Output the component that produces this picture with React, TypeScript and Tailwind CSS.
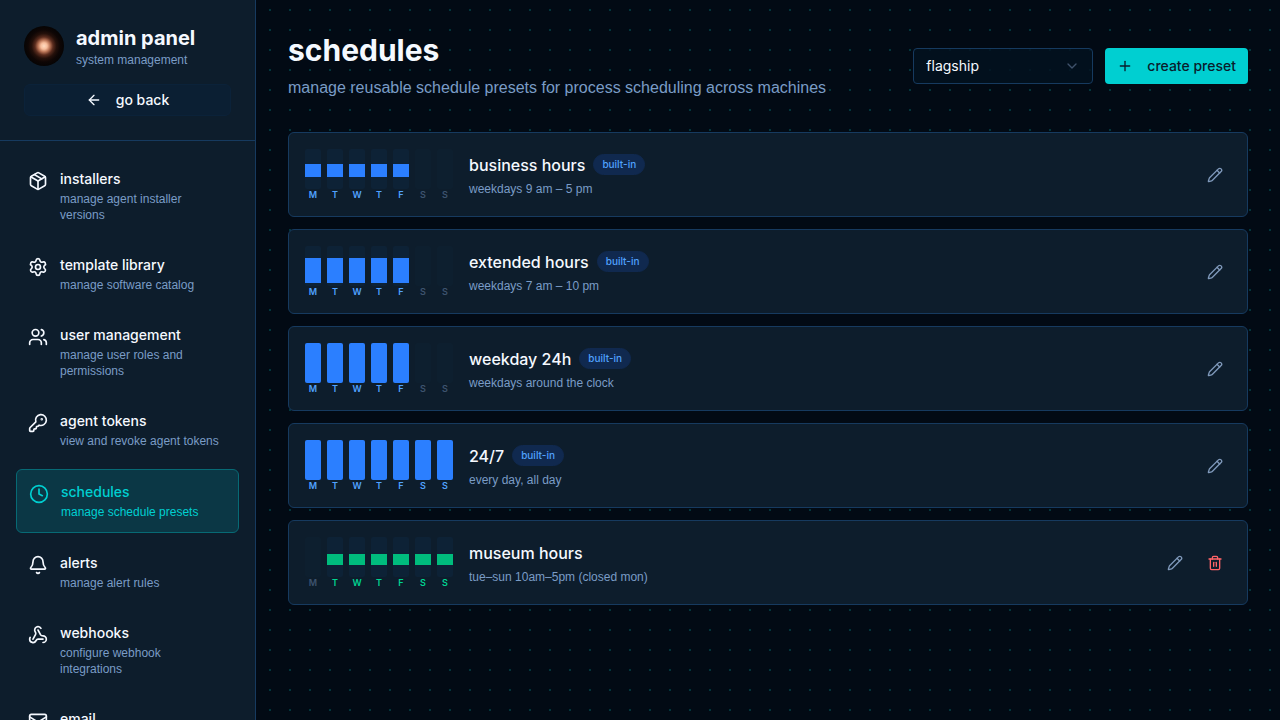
import {
  ArrowLeft,
  Bell,
  ChevronDown,
  Clock,
  KeyRound,
  Mail,
  Package,
  Pencil,
  Plus,
  Settings,
  Trash2,
  Users,
  Webhook,
} from 'lucide-react';
import type { LucideIcon } from 'lucide-react';
import { useState } from 'react';

interface NavItem {
  label: string;
  description: string;
  icon: LucideIcon;
}

interface Preset {
  name: string;
  description: string;
  builtIn: boolean;
  days: boolean[];
  start: number;
  stop: number;
}

const NAV_ITEMS: NavItem[] = [
  { label: 'installers', description: 'manage agent installer versions', icon: Package },
  { label: 'template library', description: 'manage software catalog', icon: Settings },
  { label: 'user management', description: 'manage user roles and permissions', icon: Users },
  { label: 'agent tokens', description: 'view and revoke agent tokens', icon: KeyRound },
  { label: 'schedules', description: 'manage schedule presets', icon: Clock },
  { label: 'alerts', description: 'manage alert rules', icon: Bell },
  { label: 'webhooks', description: 'configure webhook integrations', icon: Webhook },
  { label: 'email', description: 'configure email delivery', icon: Mail },
];

const DAYS = ['M', 'T', 'W', 'T', 'F', 'S', 'S'];
const WEEKDAYS = [true, true, true, true, true, false, false];
const EVERY_DAY = [true, true, true, true, true, true, true];
const TUE_SUN = [false, true, true, true, true, true, true];

const PRESETS: Preset[] = [
  { name: 'business hours', description: 'weekdays 9 am – 5 pm', builtIn: true, days: WEEKDAYS, start: 9, stop: 17 },
  { name: 'extended hours', description: 'weekdays 7 am – 10 pm', builtIn: true, days: WEEKDAYS, start: 7, stop: 22 },
  { name: 'weekday 24h', description: 'weekdays around the clock', builtIn: true, days: WEEKDAYS, start: 0, stop: 24 },
  { name: '24/7', description: 'every day, all day', builtIn: true, days: EVERY_DAY, start: 0, stop: 24 },
  { name: 'museum hours', description: 'tue–sun 10am–5pm (closed mon)', builtIn: false, days: TUE_SUN, start: 10, stop: 17 },
];

const Logo = () => (
  <svg viewBox="0 0 40 40" className="size-10 shrink-0" aria-hidden="true">
    <defs>
      <radialGradient id="glow">
        <stop offset="0" stopColor="#ffdcc2" />
        <stop offset="0.16" stopColor="#f7bd9b" />
        <stop offset="0.3" stopColor="#b87355" />
        <stop offset="0.45" stopColor="#5a2c1e" />
        <stop offset="0.62" stopColor="#24100a" />
        <stop offset="0.8" stopColor="#0e0605" />
        <stop offset="1" stopColor="#060404" />
      </radialGradient>
    </defs>
    <circle cx="20" cy="20" r="20" fill="url(#glow)" />
  </svg>
);

const Sidebar = () => (
  <aside className="flex w-64 shrink-0 flex-col overflow-hidden border-r border-[#163a5f] bg-[#0d1d2c]">
    <div className="border-b border-[#163a5f] p-6">
      <div className="flex items-center gap-3">
        <Logo />
        <div>
          <p className="text-xl font-bold">admin panel</p>
          <p className="font-['Liberation_Sans',sans-serif] text-xs text-[#7a9cc6]">
            system management
          </p>
        </div>
      </div>
      <button className="mt-4 flex h-8 w-full items-center justify-center gap-3.5 rounded-md border border-[#0b2239] bg-[#0b1f33] text-sm font-medium">
        <ArrowLeft className="size-4" />
        go back
      </button>
    </div>

    <nav className="flex flex-col gap-2 p-4">
      {NAV_ITEMS.map(({ label, description, icon: Icon }) => {
        const active = label === 'schedules';

        return (
          <a
            key={label}
            href={`#${label}`}
            aria-current={active ? 'page' : undefined}
            className={`flex items-start gap-3 rounded-md py-3 pr-4 pl-3 ${
              active ? 'border border-[#076a75] bg-[#0b3745] text-[#00cfd1]' : ''
            }`}
          >
            <Icon className="mt-0.5 size-5 shrink-0" />
            <span className="min-w-0">
              <span className="block text-sm font-medium">{label}</span>
              <span
                className={`mt-0.5 block font-['Liberation_Sans',sans-serif] text-xs ${active ? '' : 'text-[#7a9cc6]'}`}
              >
                {description}
              </span>
            </span>
          </a>
        );
      })}
    </nav>
  </aside>
);

const WeekChart = ({ preset }: { preset: Preset }) => {
  const fill = preset.builtIn ? 'bg-[#2b7fff]' : 'bg-[#00bc7d]';
  const text = preset.builtIn ? 'text-[#51a2ff]' : 'text-[#00d492]';

  return (
    <div className="flex shrink-0 gap-1.5">
      {DAYS.map((day, i) => {
        const on = preset.days[i];

        return (
          <div key={i} className="flex w-4 flex-col items-center gap-px">
            <div
              className={`h-10 w-full overflow-hidden rounded-xs ${on ? 'bg-[#0d2236]' : 'bg-[#0d1f2f]'}`}
            >
              {on && (
                <div
                  className={`relative w-full ${fill}`}
                  style={{
                    top: `${(preset.start / 24) * 100}%`,
                    height: `${((preset.stop - preset.start) / 24) * 100}%`,
                  }}
                />
              )}
            </div>
            <span
              className={`text-[9px] leading-[10px] font-semibold ${on ? text : 'text-[#3d536f]'}`}
            >
              {day}
            </span>
          </div>
        );
      })}
    </div>
  );
};

const PresetCard = ({ preset }: { preset: Preset }) => (
  <li className="flex items-center gap-4 rounded-md border border-[#163a5f] bg-[#0d1d2c] p-4">
    <WeekChart preset={preset} />
    <div className="min-w-0 flex-1">
      <div className="flex items-center gap-2">
        <h2 className="text-base font-medium">{preset.name}</h2>
        {preset.builtIn && (
          <span className="rounded-full border border-[#10294f] bg-[#10294f] px-2 py-0.5 text-[10px] leading-[15px] font-medium text-[#51a2ff]">
            built-in
          </span>
        )}
      </div>
      <p className="mt-1 font-['Liberation_Sans',sans-serif] text-xs text-[#7a9cc6]">
        {preset.description}
      </p>
    </div>
    <div className="flex gap-2">
      <button
        aria-label={`edit ${preset.name}`}
        className="flex size-8 items-center justify-center text-[#7f99bb]"
      >
        <Pencil className="size-4" />
      </button>
      {!preset.builtIn && (
        <button
          aria-label={`delete ${preset.name}`}
          className="flex size-8 items-center justify-center text-[#ff6467]"
        >
          <Trash2 className="size-4" />
        </button>
      )}
    </div>
  </li>
);

const App = () => {
  const [site, setSite] = useState('flagship');

  return (
    <div className="flex h-screen bg-[#020a14] bg-[radial-gradient(circle,#02363c_1px,transparent_1px)] bg-[size:20px_20px] font-['Inter',sans-serif] text-[#f5f9ff]">
      <Sidebar />
      <main className="min-w-0 flex-1 overflow-hidden p-8">
        <header className="mb-8 flex items-center justify-between gap-4">
          <div>
            <h1 className="text-3xl font-bold">schedules</h1>
            <p className="mt-2 font-['Liberation_Sans',sans-serif] text-base text-[#7a9cc6]">
              manage reusable schedule presets for process scheduling across
              machines
            </p>
          </div>
          <div className="flex shrink-0 items-center gap-3">
            <div className="relative">
              <select
                aria-label="site"
                value={site}
                onChange={(e) => setSite(e.target.value)}
                className="h-9 w-45 appearance-none rounded-sm border border-[#163a5f] bg-[#03111f]/80 px-3 text-sm"
              >
                <option value="flagship">flagship</option>
              </select>
              <ChevronDown className="pointer-events-none absolute top-2.5 right-[13px] size-4 text-[#3f526b]" />
            </div>
            <button className="flex h-9 items-center gap-3.5 rounded-sm bg-[#00cfd1] px-3 text-sm font-medium text-[#0a1c2c]">
              <Plus className="size-4" />
              create preset
            </button>
          </div>
        </header>

        <ul className="flex flex-col gap-3">
          {PRESETS.map((preset) => (
            <PresetCard key={preset.name} preset={preset} />
          ))}
        </ul>
      </main>
    </div>
  );
};

export default App;
